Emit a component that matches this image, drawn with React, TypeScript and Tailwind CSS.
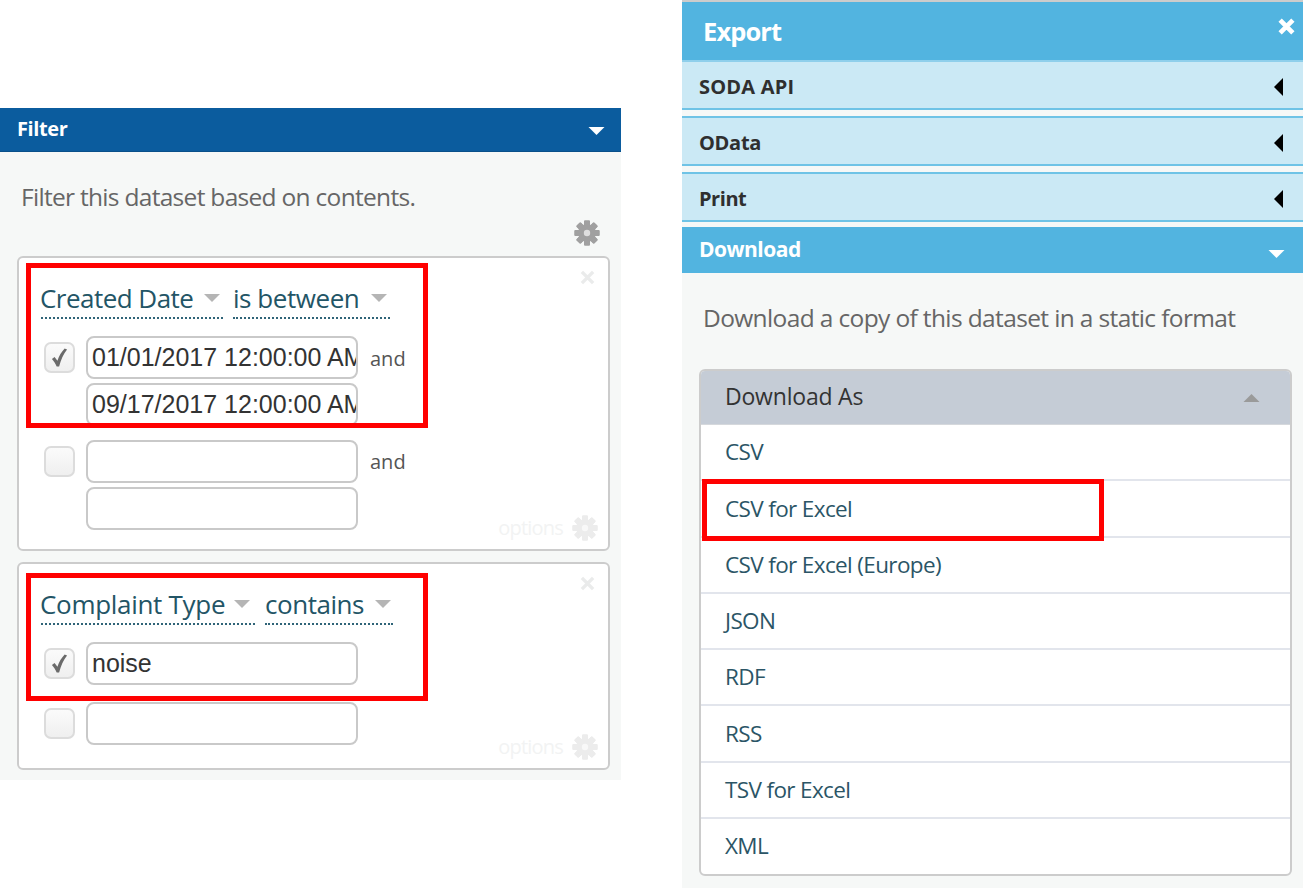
import React from "react";

const sans = "font-['Open_Sans','Noto_Sans',sans-serif]";

function Gear({ className }: { className: string }) {
  const teeth = [0, 45, 90, 135, 180, 225, 270, 315];
  return (
    <svg viewBox="0 0 26 26" className={className} fill="currentColor">
      {teeth.map((a) => (
        <rect key={a} x="10" y="0.5" width="6" height="25" rx="1" transform={`rotate(${a} 13 13)`} />
      ))}
      <circle cx="13" cy="13" r="9" />
      <circle cx="13" cy="13" r="3.2" fill="#ffffff" fillOpacity="0.65" />
    </svg>
  );
}

function Tri({ dir, className }: { dir: "down" | "up" | "left"; className: string }) {
  const pts = dir === "down" ? "0,0 16,0 8,8" : dir === "up" ? "0,8 16,8 8,0" : "9,0 9,18 0,9";
  const vb = dir === "left" ? "0 0 9 18" : "0 0 16 8";
  return (
    <svg viewBox={vb} className={className} fill="currentColor">
      <polygon points={pts} />
    </svg>
  );
}

function Cross({ className, weight = 3.6 }: { className: string; weight?: number }) {
  return (
    <svg viewBox="0 0 16 16" className={className} stroke="currentColor" strokeWidth={weight} fill="none">
      <path d="M2 2 14 14M14 2 2 14" />
    </svg>
  );
}

function Check({ on }: { on?: boolean }) {
  return (
    <div className="w-[31px] h-[31px] shrink-0 rounded-[7px] border-2 border-[#dcdcdc] bg-gradient-to-b from-[#fbfbfb] to-[#efefef] flex items-center justify-center">
      {on && (
        <svg viewBox="0 0 18 20" className="w-[17px] h-[19px]" fill="#6a6a6a">
          <path d="M1 11.5 3.8 9.5 6.8 13.5C8.5 8.5 11 4 14.5 0.5L17 1.5C13 6.5 10.5 12.5 8.6 19.5L6 19.5C4.8 16.5 3 13.8 1 11.5Z" />
        </svg>
      )}
    </div>
  );
}

function Field({ value, className = "" }: { value?: string; className?: string }) {
  return (
    <div
      className={`w-[272px] h-[43px] rounded-[8px] border-2 border-[#c9c9c9] bg-white pl-[4px] overflow-hidden whitespace-nowrap font-['Liberation_Sans',sans-serif] text-[25px] leading-[39px] text-[#333333] ${className}`}
    >
      {value}
    </div>
  );
}

function Selector({ label, width, gap, shift, track }: { label: string; width: string; gap: string; shift: string; track: string }) {
  return (
    <div className={`${width} h-[39px] pb-[2px] border-b-2 border-dotted border-[#2f6478] flex items-center text-[#235566] text-[26px] leading-[36px] whitespace-nowrap`}>
      <span className={`${shift} ${track}`}>{label}</span>
      <Tri dir="down" className={`w-[16px] h-[8px] text-[#b5b5b5] ${gap}`} />
    </div>
  );
}

function Options() {
  return (
    <div className="flex items-center gap-[9px] text-[#f2f3f3]">
      <span className="text-[20px] leading-[24px] tracking-[-0.8px]">options</span>
      <Gear className="w-[26px] h-[26px] text-[#ececec]" />
    </div>
  );
}

function Panel({ children, className }: { children: React.ReactNode; className: string }) {
  return (
    <div className={`relative ml-[17px] mr-[11px] rounded-[6px] border-2 border-[#cccccc] bg-white ${className}`}>
      <Cross className="absolute right-[13px] top-[12px] w-[15px] h-[15px] text-[#eaebeb]" />
      {children}
    </div>
  );
}

function FilterBox() {
  return (
    <section className="w-[621px] h-[672px] mt-[108px] shrink-0 bg-[#f6f8f7]">
      <header className="h-[44px] bg-[#0b5c9e] border-b border-[#09508a] flex items-center justify-between pl-[17px] pr-[16px]">
        <span className="text-white font-bold text-[20px] tracking-[-0.4px] -mt-[2px]">Filter</span>
        <Tri dir="down" className="w-[17px] h-[8px] text-white mt-[2px]" />
      </header>
      <p className="pl-[21px] pt-[28px] text-[#666666] text-[24.5px] leading-[34px] tracking-[-0.7px]">Filter this dataset based on contents.</p>
      <div className="flex justify-end pr-[21px] pt-[6px] h-[42px]">
        <Gear className="w-[26px] h-[26px] text-[#a0a0a0]" />
      </div>
      <Panel className="h-[295px] pt-[22px]">
        <div className="flex pl-[22px] gap-[10px]">
          <Selector label="Created Date" width="w-[182px]" gap="ml-[11px]" shift="-ml-[1px]" track="tracking-[-0.53px]" />
          <Selector label="is between" width="w-[157px]" gap="ml-[12px]" shift="ml-0" track="tracking-[-0.45px]" />
        </div>
        <div className="flex flex-col gap-[4px] mt-[17px] pl-[25px]">
          <div className="flex items-center gap-[11px]">
            <Check on />
            <Field value="01/01/2017 12:00:00 AM" />
            <span className="ml-[1px] mt-[2px] text-[#555555] text-[20px]">and</span>
          </div>
          <Field className="ml-[42px]" value="09/17/2017 12:00:00 AM" />
        </div>
        <div className="flex flex-col gap-[4px] mt-[14px] pl-[25px]">
          <div className="flex items-center gap-[11px]">
            <Check />
            <Field />
            <span className="ml-[1px] mt-[1px] text-[#555555] text-[20px]">and</span>
          </div>
          <Field className="ml-[42px]" />
        </div>
        <div className="absolute right-[10px] bottom-[8px]">
          <Options />
        </div>
      </Panel>
      <Panel className="h-[208px] mt-[11px] pt-[22px]">
        <div className="flex pl-[22px] gap-[10px]">
          <Selector label="Complaint Type" width="w-[214px]" gap="ml-[9px]" shift="-ml-[1px]" track="tracking-[-0.3px]" />
          <Selector label="contains" width="w-[128px]" gap="ml-[11px]" shift="ml-0" track="tracking-[-0.45px]" />
        </div>
        <div className="flex items-center gap-[11px] mt-[17px] pl-[25px]">
          <Check on />
          <Field value="noise" />
        </div>
        <div className="flex items-center gap-[11px] mt-[17px] pl-[25px]">
          <Check />
          <Field />
        </div>
        <div className="absolute right-[10px] bottom-[8px]">
          <Options />
        </div>
      </Panel>
    </section>
  );
}

function Accordion({ label, space, track }: { label: string; space: string; track: string }) {
  return (
    <div className={`h-[48px] pt-[4px] bg-[#cbe9f5] border-b-2 border-[#6fc3e6] flex items-center justify-between pl-[17px] pr-[20px] ${space}`}>
      <span className={`font-bold text-[#2f2f2f] text-[20px] ${track}`}>{label}</span>
      <Tri dir="left" className="w-[9px] h-[18px] text-black" />
    </div>
  );
}

function ExportBox() {
  const items = ["CSV", "CSV for Excel", "CSV for Excel (Europe)", "JSON", "RDF", "RSS", "TSV for Excel", "XML"];
  return (
    <section className="w-[621px] h-[888px] ml-[61px] shrink-0 bg-[#f6f8f7] border-t-2 border-[#cccccc]">
      <header className="h-[58px] bg-[#52b4e0] flex items-center justify-between pl-[21px] pr-[8px]">
        <span className="text-white font-bold text-[25.5px] tracking-[-0.9px]">Export</span>
        <Cross className="w-[17px] h-[17px] text-white mb-[10px]" weight={4.4} />
      </header>
      <div className="h-[2px] bg-[#8fcfeb]" />
      <Accordion label="SODA API" space="mb-[6px]" track="tracking-[0.2px]" />
      <div className="border-t-2 border-[#6fc3e6]">
        <Accordion label="OData" space="mb-[6px]" track="tracking-[-0.3px]" />
      </div>
      <div className="border-t-2 border-[#6fc3e6]">
        <Accordion label="Print" space="mb-[5px]" track="tracking-[-0.45px]" />
      </div>
      <div className="h-[46px] bg-[#52b4e0] flex items-center justify-between pl-[17px] pr-[18px]">
        <span className="text-white font-bold text-[21px] tracking-[-0.5px]">Download</span>
        <Tri dir="down" className="w-[17px] h-[8px] text-white mt-[8px]" />
      </div>
      <p className="pl-[21px] pt-[28px] text-[#666666] text-[24.5px] leading-[34px] tracking-[-0.63px]">Download a copy of this dataset in a static format</p>
      <div className="ml-[17px] mr-[11px] mt-[34px] rounded-[6px] border-2 border-[#cccccc] bg-white overflow-hidden">
        <div className="h-[54px] bg-[#c5ccd6] flex items-center justify-between pl-[24px] pr-[30px] border-b border-[#d5d8dc]">
          <span className="text-[#333333] text-[23px] tracking-[-0.2px] -mt-[2px]">Download As</span>
          <Tri dir="up" className="w-[17px] h-[8px] text-[#9a9a9a]" />
        </div>
        {items.map((t, i) => (
          <div key={t} className={`flex items-center pl-[24px] text-[#2b5566] text-[22.5px] tracking-[-0.63px] ${i < items.length - 1 ? "h-[56.25px] border-b-2 border-[#e2e5ec]" : "h-[55px]"}`}>
            {t}
          </div>
        ))}
      </div>
    </section>
  );
}

export default function App() {
  return (
    <div className={`relative w-[1303px] h-[888px] overflow-hidden bg-white flex items-start ${sans}`}>
      <FilterBox />
      <ExportBox />
      <div className="absolute left-[26px] top-[263px] w-[402px] h-[165px] border-[5px] border-[#ff0000]" />
      <div className="absolute left-[26px] top-[573px] w-[402px] h-[128px] border-[5px] border-[#ff0000]" />
      <div className="absolute left-[702px] top-[479px] w-[402px] h-[62px] border-[5px] border-[#ff0000]" />
    </div>
  );
}
